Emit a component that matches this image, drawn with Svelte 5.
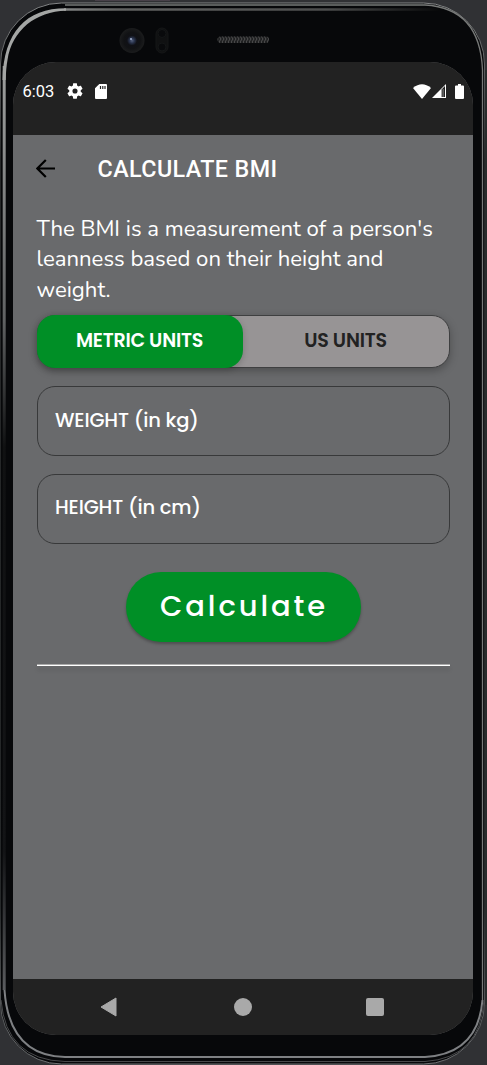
<script>
  let unit = $state('metric');
</script>

<div class="device">
  <svg class="shell" width="487" height="1065" viewBox="0 0 487 1065" aria-hidden="true">
    <defs>
      <linearGradient id="toprim" gradientUnits="userSpaceOnUse" x1="60" y1="0" x2="440" y2="0">
        <stop offset="0" stop-color="#858786" />
        <stop offset=".15" stop-color="#626362" />
        <stop offset=".7" stop-color="#4c4d4d" />
        <stop offset="1" stop-color="#08090a" />
      </linearGradient>
      <linearGradient id="side" gradientUnits="userSpaceOnUse" x1="0" y1="0" x2="0" y2="1065">
        <stop offset="0" stop-color="#a8aaa9" />
        <stop offset=".13" stop-color="#8e9090" />
        <stop offset=".3" stop-color="#606263" />
        <stop offset=".42" stop-color="#101112" />
        <stop offset=".8" stop-color="#131416" />
        <stop offset=".94" stop-color="#606265" />
        <stop offset="1" stop-color="#8e8f90" />
      </linearGradient>
      <linearGradient id="outer" gradientUnits="userSpaceOnUse" x1="0" y1="0" x2="0" y2="1065">
        <stop offset="0" stop-color="#858788" />
        <stop offset=".15" stop-color="#252728" />
        <stop offset=".85" stop-color="#252829" />
        <stop offset="1" stop-color="#707274" />
      </linearGradient>
      <radialGradient id="lens">
        <stop offset="0" stop-color="#56627f" />
        <stop offset=".2" stop-color="#29334c" />
        <stop offset=".4" stop-color="#101116" />
        <stop offset=".65" stop-color="#111214" />
        <stop offset="1" stop-color="#1b1c1d" />
      </radialGradient>
      <pattern id="mesh" width="3" height="6" patternUnits="userSpaceOnUse">
        <path d="M0 0l2 3-2 3" fill="none" stroke="#555" stroke-width=".9" />
      </pattern>
    </defs>
    <rect width="487" height="1065" fill="#303134" />
    <path d="M95 0h75v1H95z" fill="#484149" />
    <path d="M485.500 70V1005" stroke="#282c2c" stroke-width="3" />
    <rect x="0.500" y="3" width="484" height="1061" rx="61" fill="#07080a" stroke="url(#outer)" />
    <path d="M482.500 1000V70Q480 8 425 5H65" fill="none" stroke="#777978" stroke-width="1.300" />
    <path d="M64 9.500H440" stroke="url(#toprim)" stroke-width="2.600" />
    <path d="M4.200 990V66" fill="none" stroke="url(#side)" stroke-width="3" />
    <path d="M2.500 80C3.500 32 26 8.200 66 8.200V10.800C36 11.500 12 30 7.500 60Q6 68 5.700 80z" fill="#a4a6a5" />
    <path d="M4.500 990Q9 1056 65 1057H425Q478 1054 482.500 1000" fill="none" stroke="#7e8083" stroke-width="2" />
    <path d="M1 1000Q6 1060 65 1061.500H425Q480 1058 484 1000" fill="none" stroke="#48494b" />
    <circle cx="132" cy="40.500" r="12.500" fill="url(#lens)" />
    <circle cx="131" cy="39" r="1.100" fill="#9eabc6" />
    <rect x="156" y="28" width="12" height="25" rx="6" fill="#101112" stroke="#151617" />
    <circle cx="162" cy="33.500" r="4" fill="#090a0c" stroke="#141617" />
    <circle cx="162" cy="47" r="4" fill="#090a0c" stroke="#141617" />
    <rect x="217.500" y="36.500" width="51.500" height="6.500" rx="3" fill="#202122" />
    <rect x="217.500" y="36.500" width="51.500" height="6.500" rx="3" fill="url(#mesh)" />
  </svg>

  <main class="screen">
    <header class="status">
      <div class="group">
        <span class="time">6:03</span>
        <svg class="gear" width="16" height="16" viewBox="2 2 20 20"><path fill="#fff" d="M19.140 12.940c.04-.3.06-.61.06-.94 0-.32-.02-.64-.07-.94l2.030-1.580c.18-.14.23-.41.12-.61l-1.920-3.320c-.12-.22-.37-.29-.59-.22l-2.390.96c-.5-.38-1.030-.7-1.620-.94l-.36-2.540c-.04-.24-.24-.41-.48-.41h-3.840c-.24 0-.43.17-.47.41l-.36 2.540c-.59.24-1.130.57-1.620.94l-2.390-.96c-.22-.08-.47 0-.59.22L2.740 8.870c-.12.21-.08.47.12.61l2.030 1.580c-.05.3-.09.63-.09.94s.02.64.07.94l-2.030 1.580c-.18.14-.23.41-.12.61l1.920 3.320c.12.22.37.29.59.22l2.390-.96c.5.38 1.030.7 1.620.94l.36 2.540c.05.24.24.41.48.41h3.840c.24 0 .44-.17.47-.41l.36-2.540c.59-.24 1.130-.56 1.620-.94l2.390.96c.22.08.47 0 .59-.22l1.920-3.320c.12-.22.07-.47-.12-.61zM12 15.200A3.200 3.200 0 1 1 12 8.800a3.200 3.200 0 0 1 0 6.400z" /></svg>
        <svg class="card" width="12" height="15" viewBox="0 0 12 15"><path fill="#fff" d="M4.300 0H11q1 0 1 1v13q0 1-1 1H1q-1 0-1-1V4.300z" /><path d="M5.500 2v3M7.800 2v3M10 2v3" stroke="#222" stroke-width="1.200" /></svg>
      </div>
      <div class="group">
        <svg width="18" height="15" viewBox="0 0 18 15"><path fill="#fff" d="M0 4Q9-3.500 18 4L9 15z" /></svg>
        <svg class="signal" width="14" height="14" viewBox="0 0 14 14"><path fill="#fff" d="M14 0v14H0z" /><path fill="#222" d="M9.600 5.500 13 2v11H9.600z" /><path fill="#777" d="M10.500 5h1.200v8h-1.200z" /></svg>
        <svg class="battery" width="9" height="15" viewBox="0 0 9 15"><path fill="#fff" d="M3 0h3v1.500h2q1 0 1 1V14q0 1-1 1H1q-1 0-1-1V2.500q0-1 1-1h2z" /></svg>
      </div>
    </header>

    <section class="content">
      <div class="appbar">
        <svg width="19" height="19" viewBox="0 0 19 19"><path d="M19 9.500H1.500M9.800 1 1.300 9.500l8.500 8.500" fill="none" stroke="#000" stroke-width="2.200" /></svg>
        <h1>CALCULATE BMI</h1>
      </div>
      <p class="intro">
        <span>The BMI is a measurement of a person's</span>
        <span>leanness based on their height and</span>
        <span>weight.</span>
      </p>
      <div class="toggle">
        <button class:active={unit === 'metric'} onclick={() => (unit = 'metric')}>METRIC UNITS</button>
        <button class:active={unit === 'us'} onclick={() => (unit = 'us')}>US UNITS</button>
      </div>
      <div class="field">WEIGHT (in kg)</div>
      <div class="field">HEIGHT (in cm)</div>
      <button class="calculate">Calculate</button>
      <div class="divider"></div>
    </section>

    <nav>
      <svg width="17" height="20" viewBox="0 0 17 20"><path d="M16 1v18L1 10z" fill="#a9a9a9" stroke="#a9a9a9" stroke-linejoin="round" /></svg>
      <i class="home"></i>
      <i class="recent"></i>
    </nav>
  </main>
</div>

<style>
  :global(body) { margin: 0; background: #303134; }
  .device { position: relative; box-sizing: border-box; width: 487px; height: 1065px; padding: 62px 14px 30px 13px; overflow: hidden; }
  .shell { position: absolute; inset: 0; }
  .screen { position: relative; display: flex; flex-direction: column; width: 460px; height: 973px; border-radius: 43px; overflow: hidden; background: #696a6c; color: #fff; }
  svg { display: block; flex: none; }
  .status { box-sizing: border-box; height: 73px; flex: none; background: #222; display: flex; align-items: flex-start; justify-content: space-between; padding: 20px 9px 0 9.500px; }
  .group { display: flex; align-items: center; height: 18px; }
  .time { font: 400 16.500px/20px Roboto, sans-serif; width: 31px; white-space: nowrap; padding-top: 1px; }
  .gear { margin-left: 13.500px; }
  .card { margin-left: 11.500px; }
  .signal { margin-left: 1px; }
  .battery { margin-left: 9px; }
  .content { box-sizing: border-box; height: 844px; flex: none; padding: 0 23.500px; display: flex; flex-direction: column; }
  .appbar { display: flex; align-items: center; height: 66px; gap: 42px; }
  .appbar svg { margin-left: -1px; margin-right: 1px; }
  h1 { margin: 1.500px 0 0; font: 500 23.300px/28px Roboto, sans-serif; letter-spacing: .42px; white-space: nowrap; }
  .intro { margin: 13px 0 0; height: 101px; flex: none; font: 400 22.150px/30.300px Nunito, "Open Sans", sans-serif; }
  .intro span { display: block; white-space: nowrap; }
  .toggle { box-sizing: border-box; display: flex; flex: none; height: 53px; border: 1px solid #3e3f40; border-radius: 18px; background: #979495; box-shadow: 0 3px 8px #0004; }
  button { border: 0; padding: 0 0 1px; margin: 0; background: none; color: #222; font: 600 19px/24px Poppins, Inter, sans-serif; letter-spacing: -.22px; }
  .toggle button { flex: 1; border-radius: 18px; white-space: nowrap; }
  .toggle .active { background: #008f26; color: #fff; margin: -1px 0 -1px -1px; box-shadow: 0 2px 6px #0003; }
  .field { box-sizing: border-box; height: 70px; flex: none; margin-top: 18px; padding: 0 17.500px 1px; border: 1px solid #38393a; border-radius: 18px; display: flex; align-items: center; font: 500 19.500px/30px Poppins, Inter, sans-serif; letter-spacing: -.15px; white-space: nowrap; }
  .field + .field { margin-top: 17.500px; }
  .calculate { width: 235px; height: 70px; flex: none; align-self: center; margin-top: 28.500px; padding: 0 0 2px 2px; border-radius: 35px; background: #008f26; color: #fff; font-size: 29px; font-weight: 500; letter-spacing: 2.900px; box-shadow: 0 2px 3px #0004; }
  .divider { height: 2px; flex: none; margin-top: 22px; background: linear-gradient(#aaa 50%, #fff 50%); box-shadow: 0 4px 4px #0002; }
  nav { height: 56px; flex: none; background: #222; display: flex; align-items: center; justify-content: space-between; box-sizing: border-box; padding: 0 89px 0 87px; }
  .home { width: 18px; height: 18px; border-radius: 50%; background: #a9a9a9; margin-left: 2px; }
  .recent { width: 18px; height: 18px; border-radius: 2px; background: #a9a9a9; }
</style>
